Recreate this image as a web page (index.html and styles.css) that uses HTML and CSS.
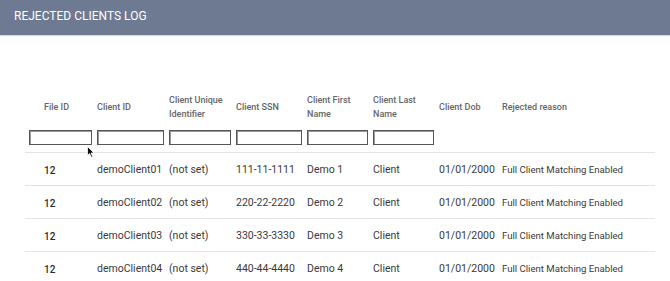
FILE: index.html
```html
<!DOCTYPE html>
<html lang="en">
<head>
    <meta charset="UTF-8">
    <meta name="viewport" content="width=device-width, initial-scale=1.0">
    <title>Rejected Clients Log</title>
    <link rel="stylesheet" href="styles.css">
</head>
<body>
    <header class="title-bar">
        <h1 class="title">REJECTED CLIENTS LOG</h1>
    </header>

    <div class="log-container">
        <table class="log-table">
            <colgroup>
                <col class="col-file">
                <col class="col-client">
                <col class="col-unique">
                <col class="col-ssn">
                <col class="col-first">
                <col class="col-last">
                <col class="col-dob">
                <col class="col-reason">
            </colgroup>
            <thead>
                <tr class="head-row">
                    <th class="first-cell">File ID</th>
                    <th>Client ID</th>
                    <th>Client Unique<br>Identifier</th>
                    <th>Client SSN</th>
                    <th>Client First<br>Name</th>
                    <th>Client Last<br>Name</th>
                    <th>Client Dob</th>
                    <th>Rejected reason</th>
                </tr>
                <tr class="filter-row">
                    <td><input type="text" class="filter-input"></td>
                    <td><input type="text" class="filter-input"></td>
                    <td><input type="text" class="filter-input"></td>
                    <td><input type="text" class="filter-input"></td>
                    <td><input type="text" class="filter-input"></td>
                    <td><input type="text" class="filter-input"></td>
                    <td></td>
                    <td></td>
                </tr>
            </thead>
            <tbody>
                <tr>
                    <td class="first-cell file-id">12</td>
                    <td>demoClient01</td>
                    <td>(not set)</td>
                    <td>111-11-1111</td>
                    <td>Demo 1</td>
                    <td>Client</td>
                    <td>01/01/2000</td>
                    <td class="reason">Full Client Matching Enabled</td>
                </tr>
                <tr>
                    <td class="first-cell file-id">12</td>
                    <td>demoClient02</td>
                    <td>(not set)</td>
                    <td>220-22-2220</td>
                    <td>Demo 2</td>
                    <td>Client</td>
                    <td>01/01/2000</td>
                    <td class="reason">Full Client Matching Enabled</td>
                </tr>
                <tr>
                    <td class="first-cell file-id">12</td>
                    <td>demoClient03</td>
                    <td>(not set)</td>
                    <td>330-33-3330</td>
                    <td>Demo 3</td>
                    <td>Client</td>
                    <td>01/01/2000</td>
                    <td class="reason">Full Client Matching Enabled</td>
                </tr>
                <tr>
                    <td class="first-cell file-id">12</td>
                    <td>demoClient04</td>
                    <td>(not set)</td>
                    <td>440-44-4440</td>
                    <td>Demo 4</td>
                    <td>Client</td>
                    <td>01/01/2000</td>
                    <td class="reason">Full Client Matching Enabled</td>
                </tr>
            </tbody>
        </table>

        <svg class="mouse-cursor" width="8" height="12" viewBox="0 0 8 12">
            <path d="M0.5 0.5 L0.5 9.5 L2.6 7.6 L4.2 11.2 L5.6 10.6 L4.1 7.1 L7 7 Z" fill="#111" stroke="#fff" stroke-width="0.8"/>
        </svg>
    </div>
</body>
</html>
```

FILE: styles.css
```css
* {
    margin: 0;
    padding: 0;
    box-sizing: border-box;
}

body {
    font-family: Roboto, "Liberation Sans", sans-serif;
    background-color: #fff;
    color: #333;
}

.title-bar {
    height: 35px;
    background-color: #6e7a92;
    padding-left: 14px;
    display: flex;
    align-items: center;
    box-shadow: 0 1px 1px rgba(0, 0, 0, 0.15);
}

.title {
    font-size: 12px;
    font-weight: 400;
    color: #fff;
    padding-bottom: 3px;
}

.log-container {
    position: relative;
    padding: 56px 15px 0 25px;
}

.log-table {
    width: 630px;
    border-collapse: collapse;
    table-layout: fixed;
}

.col-file { width: 68px; }
.col-client { width: 72px; }
.col-unique { width: 67px; }
.col-ssn { width: 71px; }
.col-first { width: 66px; }
.col-last { width: 66px; }
.col-dob { width: 63px; }
.col-reason { width: 157px; }

.log-table th {
    height: 32px;
    padding: 0 1px 0 4px;
    font-size: 9px;
    font-weight: 500;
    line-height: 14px;
    color: #666;
    text-align: left;
    vertical-align: middle;
}

.log-table th.first-cell {
    padding-left: 19px;
}

.filter-row td {
    height: 29px;
    padding: 0 1px 0 4px;
    border-bottom: 1px solid #e3e3e3;
    vertical-align: middle;
}

.filter-input {
    display: block;
    width: 100%;
    height: 15px;
    border: 1px solid #555;
    box-shadow: inset 1px 1px 0 #999;
    background: #fff;
}

.log-table tbody td {
    height: 33px;
    padding: 1px 1px 0 4px;
    font-size: 10.5px;
    color: #3a3a3a;
    border-bottom: 1px solid #e3e3e3;
    vertical-align: middle;
    white-space: nowrap;
}

.log-table tbody td.first-cell {
    padding-left: 19px;
}

.log-table tbody td.file-id {
    font-size: 10px;
    font-weight: 500;
    color: #2a2a2a;
    padding-top: 3px;
}

.log-table tbody td.reason {
    font-size: 9.6px;
}

.mouse-cursor {
    position: absolute;
    left: 87px;
    top: 111px;
}
```
